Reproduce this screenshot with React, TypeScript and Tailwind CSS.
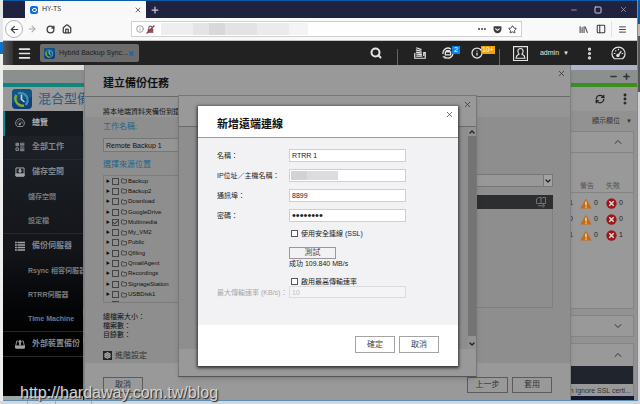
import type { ReactNode } from "react";
import {
  ArrowLeft,
  ArrowRight,
  Check,
  ChevronDown,
  ChevronUp,
  Ellipsis,
  EllipsisVertical,
  Folder,
  House,
  Info,
  Menu,
  Minus,
  PanelLeft,
  Plus,
  RefreshCw,
  RotateCw,
  Search,
  Settings,
  Square,
  Star,
  X,
} from "lucide-react";
import { FaGetPocket } from "react-icons/fa";

const GaugeIcon = ({ className }: { className: string }) => (
  <svg viewBox="0 0 16 16" className={className} fill="none" stroke="currentColor" strokeWidth="1.3">
    <path d="M3.6 13.6a7 7 0 1 1 8.8 0z" strokeLinejoin="round" />
    <path d="M7.2 10.4 11 5.6M8 3v1.6M3 8h1.6M11.4 8H13M4.6 4.8l1 1" />
    <circle cx="7.4" cy="10" r="1.2" fill="currentColor" />
  </svg>
);

const TasksIcon = ({ className }: { className: string }) => (
  <svg viewBox="0 0 16 16" className={className} fill="none" stroke="currentColor" strokeWidth="1.3">
    <path d="M1.5 2h4v4h-4zM1.5 9.5h4v4h-4zM8 2h7M8 4.2h7M8 6.4h7M8 9.5h7M8 11.7h7M8 13.9h7" />
    <path d="m2.2 3.6 1.2 1.3 2.4-3" />
  </svg>
);

const StorageIcon = ({ className }: { className: string }) => (
  <svg viewBox="0 0 16 16" className={className} fill="none" stroke="currentColor" strokeWidth="1.6">
    <path d="M1.5 1.5h13v13h-13z" />
    <path d="M1.5 11h13v3.5h-13z" fill="currentColor" />
    <path d="M8 2.5v4" strokeWidth="2.8" />
    <path d="M4 5.4h8L8 10z" fill="currentColor" stroke="none" />
  </svg>
);

const ServerIcon = ({ className }: { className: string }) => (
  <svg viewBox="0 0 16 16" className={className} fill="currentColor">
    <path d="M0 1h3v2.6H0zM4 1h12v2.6H4zM0 5h3v2.6H0zM4 5h12v2.6H4zM0 9h3v2.6H0zM4 9h12v2.6H4zM0 13h3v2.4H0zM4 13h12v2.4H4z" />
  </svg>
);

const DeviceIcon = ({ className }: { className: string }) => (
  <svg viewBox="0 0 16 16" className={className} fill="none" stroke="currentColor" strokeWidth="1.4">
    <path d="M4.5 3H3L1 11v3.5h14V11l-2-8h-1.500" />
    <path d="M1 11h14v3.500H1z" fill="currentColor" />
    <path d="M8 10V4" strokeWidth="2.8" />
    <path d="M4.500 5h7L8 .6z" fill="currentColor" stroke="none" />
  </svg>
);

const StackIcon = ({ className }: { className: string }) => (
  <svg viewBox="0 0 16 16" className={className} fill="none" stroke="currentColor" strokeWidth="1.6">
    <path d="M3 1l7 2.500M2.500 3.800l7.500 2M2.500 6.800l8 1.300M3 9.600l7.500.6M3 12.200h8" />
    <path d="M1 8v7h14V7.500h-2V12" />
  </svg>
);

const UserIcon = ({ className }: { className: string }) => (
  <svg viewBox="0 0 16 16" className={className} fill="none" stroke="currentColor" strokeWidth="1.2">
    <path d="M.6.6h14.800v14.800H.6z" />
    <path d="M8 2.600c-2 0-2.800 1.400-2.800 3 0 1.300.6 2.400 1.300 3C5 9.400 3.400 10 3.200 13h9.600c-.2-3-1.800-3.600-3.300-4.400.7-.6 1.300-1.700 1.300-3 0-1.600-.8-3-2.800-3z" />
  </svg>
);

const SyncIcon = ({ className }: { className: string }) => (
  <svg viewBox="0 0 16 16" className={className} fill="none" stroke="currentColor" strokeWidth="1.7">
    <path d="M1.500 9.500A6.500 6.500 0 0 1 12 3M14.500 7A6.500 6.500 0 0 1 4 13.300M4 13.300H1M4 13.300v2.500" />
    <path d="M4.500 6.500h7v4h-7zM6 6.500V5h4v1.500" />
  </svg>
);

const LibraryIcon = ({ className }: { className: string }) => (
  <svg viewBox="0 0 16 16" className={className} fill="none" stroke="currentColor" strokeWidth="1.8">
    <path d="M2 2v12M5.500 4v10M9 2v12M11 3l4 11" />
  </svg>
);

const LockOffIcon = ({ className }: { className: string }) => (
  <svg viewBox="0 0 16 16" className={className} fill="none">
    <path d="M5 8V5a3 3 0 0 1 6 0v3" stroke="#666" strokeWidth="2" />
    <path d="M3 7h10v7H3z" fill="#666" />
    <path d="M1 15 15 1" stroke="#d6203c" strokeWidth="2.400" />
  </svg>
);

const AppLogo = ({ className }: { className: string }) => (
  <svg viewBox="0 0 20 20" className={className} fill="none">
    <rect width="20" height="20" rx="4" fill="#0d3f78" />
    <path d="M0 4a4 4 0 0 1 4-4h12a4 4 0 0 1 4 4v4L0 14z" fill="#125583" />
    <path d="M4.500 6A7 7 0 0 0 12 16.500" stroke="#86a82f" strokeWidth="2.400" />
    <path d="M6 4.500a7 7 0 0 1 7.500 11.500" stroke="#3f8fb4" strokeWidth="2.400" />
    <path d="M9.500 5.500v5l3 2.500" stroke="#c8d4da" strokeWidth="1.600" />
  </svg>
);

const WarningIcon = () => (
  <svg viewBox="0 0 12 11" className="h-[11px] w-3">
    <path d="M6 .5 11.700 10.500H.3z" fill="#c76a14" />
    <path d="M6 3.500v4M6 8.400v1.400" stroke="#e8dccb" strokeWidth="1.400" />
  </svg>
);

const ErrorIcon = () => (
  <svg viewBox="0 0 12 12" className="size-[11px]">
    <circle cx="6" cy="6" r="5.600" fill="#a51418" />
    <path d="m3.600 3.600 4.800 4.800M8.400 3.600 3.600 8.400" stroke="#ddd" strokeWidth="1.600" />
  </svg>
);

const ExportIcon = () => (
  <svg viewBox="0 0 16 16" className="size-3" fill="none" stroke="#77797b" strokeWidth="1.200">
    <path d="M2 9V4l3-2h3v8H2zM8 4l2-2h4v8H8" />
    <path d="M4 13h8M10 10.500l3 2.500-3 2.500" />
  </svg>
);

const BrowserTabs = () => (
  <div className="flex h-[18px] border-t border-[#0a5aa8] bg-[#20233f] pl-[22px] text-[#c9cad6]">
    <div className="flex w-[121px] items-center bg-[#f8f8fa] pr-1 pl-[5px] text-[#222]">
      <span className="flex size-2 items-center justify-center rounded-[2px] bg-[#0d6fe0]">
        <span className="h-1 w-[5px] rounded-full border border-white" />
      </span>
      <span className="ml-1 flex-1 font-['Open_Sans',sans-serif] text-[7px]">HY-TS</span>
      <button aria-label="Close tab">
        <X className="size-2" strokeWidth={2} />
      </button>
    </div>
    <button aria-label="New tab" className="px-1">
      <Plus className="size-[10px]" strokeWidth={3} />
    </button>
    <div className="ml-auto flex items-center">
      <button aria-label="Minimize" className="flex w-6 justify-center">
        <Minus className="size-2" />
      </button>
      <button aria-label="Maximize" className="flex w-6 justify-center">
        <Square className="size-2" strokeWidth={3} />
      </button>
      <button aria-label="Close" className="flex w-[27px] justify-center">
        <X className="size-[9px]" strokeWidth={1.5} />
      </button>
    </div>
  </div>
);

const BrowserToolbar = () => (
  <div className="flex h-[23px] items-center border-b border-[#c4c4c6] bg-[#f9f9fa] text-[#3d3d40]">
    <button aria-label="Back" className="ml-[2px] flex size-[18px] items-center justify-center rounded-full border border-[#b5b5b8] bg-white">
      <ArrowLeft className="size-[11px]" strokeWidth={2.5} />
    </button>
    <button aria-label="Forward" className="flex w-[18px] justify-center text-[#a5a5a8]">
      <ArrowRight className="size-[10px]" strokeWidth={2.5} />
    </button>
    <button aria-label="Reload" className="flex w-[18px] justify-center">
      <RotateCw className="size-[9px]" strokeWidth={3.5} />
    </button>
    <button aria-label="Home" className="flex w-4 justify-center">
      <House className="size-[10px]" strokeWidth={3} />
    </button>
    <div className="mr-[57px] ml-14 flex h-4 flex-1 items-center gap-[2px] border border-[#d0d0d2] bg-white pl-1">
      <Info className="size-2 text-[#777]" />
      <LockOffIcon className="size-[9px]" />
      <span className="ml-1 flex h-3 w-[147px]">
        <span className="w-8 bg-[#eeeeee]" />
        <span className="w-4 bg-[#e4e4e4]" />
        <span className="w-4 bg-[#d8d8d8]" />
        <span className="w-8 bg-[#e3e3e3]" />
        <span className="w-8 bg-[#ebebeb]" />
        <span className="flex-1 bg-[#f4f4f4]" />
      </span>
      <span className="mr-1 ml-auto flex items-center gap-[6px]">
        <Ellipsis className="size-[10px]" strokeWidth={3} />
        <FaGetPocket className="size-[9px]" />
        <Star className="size-[9px]" strokeWidth={2.5} />
      </span>
    </div>
    <div className="flex items-center">
      <LibraryIcon className="mr-2 size-[9px]" />
      <PanelLeft className="mr-[5px] size-[10px]" strokeWidth={2.5} />
      <button aria-label="Open menu" className="flex h-4 w-[26px] items-center justify-center border-l border-[#e2e2e2] pr-1">
        <Menu className="size-[9px]" strokeWidth={2.5} />
      </button>
    </div>
  </div>
);

const Badge = ({ color, children }: { color: string; children: ReactNode }) => (
  <span className={`absolute -top-[1px] left-[10px] text-[7px] leading-[8px] text-white ${color}`}>
    {children}
  </span>
);

const DesktopBar = () => (
  <div className="flex h-6 bg-[#222222] text-[#e4e4e4]">
    <div className="w-[10px] bg-linear-to-r from-[#555] to-[#333]" />
    <button aria-label="Main menu" className="mr-2 ml-1 flex w-[15px] items-center justify-center">
      <Menu className="size-[15px]" strokeWidth={2.5} />
    </button>
    <div className="my-[3px] flex w-[99px] items-center rounded-[2px] bg-[#6c6c6c] px-1 text-[#1c1c1c]">
      <AppLogo className="size-[11px]" />
      <span className="ml-1 flex-1 text-[7px]">Hybrid Backup Sync...</span>
      <button aria-label="Close Hybrid Backup Sync">
        <X className="size-[7px] text-[#1f5f9c]" strokeWidth={4} />
      </button>
    </div>
    <div className="ml-auto flex items-center">
      <button aria-label="Search" className="mr-[15px]">
        <Search className="size-3" strokeWidth={4} />
      </button>
      <span className="mt-2 h-4 w-px bg-[#666]" />
      <StackIcon className="ml-4 size-3" />
      <span className="relative ml-4">
        <SyncIcon className="size-3" />
        <Badge color="bg-[#1080f0] px-[2px]">2</Badge>
      </span>
      <span className="relative mr-4 ml-[17px]">
        <Info className="size-3" strokeWidth={2.5} />
        <Badge color="bg-[#f5a00c] px-px">10+</Badge>
      </span>
      <span className="mt-2 h-4 w-px bg-[#666]" />
      <UserIcon className="ml-[13px] size-[15px]" />
      <button className="ml-3 flex items-center gap-1 text-[7px]">
        admin <span className="text-[6px]">▼</span>
      </button>
      <button aria-label="More" className="ml-[13px]">
        <EllipsisVertical className="size-[15px]" strokeWidth={3} />
      </button>
      <GaugeIcon className="mr-[11px] ml-[14px] size-[15px]" />
    </div>
  </div>
);

const navItems = [
  { label: "總覽", icon: GaugeIcon, active: true },
  { label: "全部工作", icon: TasksIcon, line: true },
  { label: "儲存空間", icon: StorageIcon },
  { label: "儲存空間" },
  { label: "設定檔", line: true },
  { label: "備份伺服器", icon: ServerIcon },
  { label: "Rsync 相容伺服器" },
  { label: "RTRR伺服器" },
  { label: "Time Machine", line: true },
  { label: "外部裝置備份", icon: DeviceIcon, line: true },
];

const Sidebar = () => (
  <nav className="flex w-20 flex-col overflow-hidden border-b-4 border-[#9aa6a6] bg-linear-to-b from-[#20242b] via-[#121418] to-black">
    <ul className="grid h-[246px] auto-rows-fr">
      {navItems.map(({ label, icon: Icon, active, line }, i) => (
        <li key={i} className={line ? "border-b border-[#25282c]" : ""}>
          <a
            href="#"
            className={`flex h-full items-center font-bold whitespace-nowrap ${
              active
                ? "border-l-2 border-[#0b8a8a] bg-[#181b20] pl-[10px] text-[8px] text-[#b4b4b4]"
                : Icon
                  ? "pl-3 text-[8px] text-[#83868b]"
                  : "pl-[25px] text-[7px] text-[#777a7f]"
            }`}
          >
            {Icon && <Icon className="mr-[7px] size-[10px] shrink-0 text-[#a2a4a6]" />}
            {label}
          </a>
        </li>
      ))}
    </ul>
  </nav>
);

const jobs = [
  { success: 1, warning: 0, failed: 0 },
  { success: 0, warning: 0, failed: 0 },
  { success: 1, warning: 0, failed: 1 },
];

const Overview = () => (
  <main className="flex flex-1 flex-col bg-[#929292] pr-[3px]">
    <button className="flex h-5 items-center justify-end gap-[6px] pr-[2px] text-[7px] text-[#333]">
      顯示欄位 <span className="text-[6px]">▼</span>
    </button>
    <section className="h-[178px] border border-[#848484] bg-[#999]">
      <div className="flex h-[21px] items-center justify-end border-b border-[#848484] pr-[9px]">
        <ChevronUp className="size-3 text-[#333]" strokeWidth={2} />
      </div>
      <table className="mt-[27px] w-full text-left text-[7px] leading-[12px] text-[#222]">
        <thead className="text-[#555]">
          <tr className="border-b border-[#848484]">
            <th className="pr-4 text-right font-normal">成功</th>
            <th className="w-[26px] font-normal">警告</th>
            <th className="w-[27px] font-normal">失敗</th>
          </tr>
        </thead>
        <tbody>
          {jobs.map((job, i) => (
            <tr key={i} className="h-4">
              <td className="pt-1 pr-[7px] text-right">{job.success}</td>
              <td className="pt-1">
                <span className="flex items-center gap-[2px]"><WarningIcon />{job.warning}</span>
              </td>
              <td className="pt-1">
                <span className="flex items-center gap-[2px]"><ErrorIcon />{job.failed}</span>
              </td>
            </tr>
          ))}
        </tbody>
      </table>
    </section>
    <section className="mt-[6px] flex h-[22px] items-center justify-end border border-[#848484] bg-[#999] pr-[9px]">
      <ChevronDown className="size-3 text-[#333]" strokeWidth={2} />
    </section>
    <section className="mt-[6px] border-x border-t border-[#848484] bg-[#999]">
      <div className="flex h-[22px] items-center justify-end pr-[9px]">
        <ChevronUp className="size-3 text-[#333]" strokeWidth={2} />
      </div>
      <div className="h-[18px] bg-[#20252d]" />
      <p className="h-3 pr-[2px] text-right text-[7px] leading-[13px] text-[#333]">You can ignore SSL certi...</p>
    </section>
    <div className="h-1 bg-[#15172a]" />
  </main>
);

const BackupApp = () => (
  <div className="flex h-full flex-col">
    <div className="h-[5px] bg-linear-to-r from-[#e6e6dc] to-[#aab0c8]" />
    <div className="flex h-[13px] items-center justify-end gap-1 bg-[#8b908e] pr-[6px] text-[#333]">
      <Minus className="size-[9px]" strokeWidth={4} />
      <Plus className="size-[9px]" strokeWidth={4} />
    </div>
    <div className="h-1 bg-linear-to-r from-[#0b8484] to-[#3d9010]" />
    <header className="flex h-6 items-center bg-[#999] pr-[3px] pl-[9px]">
      <AppLogo className="size-5" />
      <h1 className="ml-[6px] text-[13px] text-[#285a8c]">混合型備份</h1>
      <button aria-label="Refresh" className="mr-[10px] ml-auto">
        <RefreshCw className="size-[10px] text-[#222]" strokeWidth={3} />
      </button>
      <button aria-label="Options" className="flex w-[19px] justify-center">
        <EllipsisVertical className="size-[14px] text-[#222]" strokeWidth={3} />
      </button>
    </header>
    <div className="flex flex-1">
      <Sidebar />
      <Overview />
    </div>
  </div>
);

const folders = [
  "Backup",
  "Backup2",
  "Download",
  "GoogleDrive",
  "Multimedia",
  "My_VM2",
  "Public",
  "Qfiling",
  "QmailAgent",
  "Recordings",
  "SignageStation",
  "USBDisk1",
  "Web",
];

const dimButton = "h-4 border border-[#5c5c5c] text-[8px] leading-none text-[#333]";

const BackupJobDialog = () => (
  <section
    aria-label="建立備份任務"
    className="absolute inset-y-0 right-[66px] left-[81px] flex flex-col border-x border-[#808080] bg-[#999] shadow-md"
  >
    <header className="flex h-8 justify-between border-b border-[#6a6a6a] pr-1 pl-[18px]">
      <h2 className="pt-3 text-[11px] leading-[13px] font-bold text-[#111]">建立備份任務</h2>
      <button aria-label="Close" className="h-[17px]">
        <X className="size-[9px] text-[#333]" strokeWidth={2} />
      </button>
    </header>
    <p className="h-5 bg-[#959595] pt-[10px] pl-[18px] text-[7px] leading-[9px] text-[#111]">將本地端資料夾備份到遠端</p>
    <div className="flex h-[246px] bg-[#8e8e8e] pr-[17px] pl-[18px]">
      <div className="w-[110px] text-[7px] leading-[9px] text-[#111]">
        <label htmlFor="job-name" className="block pt-[5px] text-[8px] leading-[10px] text-[#1d6788]">
          工作名稱:
        </label>
        <input
          id="job-name"
          defaultValue="Remote Backup 1"
          className="mt-[6px] block h-[14px] w-full border border-[#777] bg-[#959595] px-[2px] text-[7px]"
        />
        <h3 className="pt-2 text-[8px] leading-[10px] text-[#1d6788]">選擇來源位置</h3>
        <div className="mt-[5px] h-32 overflow-hidden border border-[#7c7c7c] pl-[2px]">
          <ul className="grid h-[134px] auto-rows-fr text-[6px]">
            {folders.map((name) => (
              <li key={name} className="flex items-center">
                <span className="mr-[2px] text-[4px]">▶</span>
                <label className="flex items-center gap-px">
                  <span className="relative mr-px flex">
                    <input
                      type="checkbox"
                      defaultChecked={name === "Multimedia"}
                      className="peer size-[7px] appearance-none border border-[#444]"
                    />
                    <Check className="absolute inset-0 hidden size-[7px] peer-checked:block" strokeWidth={3} />
                  </span>
                  <Folder className="size-[6px] text-[#333]" strokeWidth={3} />
                  {name}
                </label>
              </li>
            ))}
          </ul>
        </div>
        <div className="mt-[9px]">
          <p>總檔案大小：</p>
          <p>檔案數：</p>
          <p>目錄數：</p>
        </div>
        <button className="mt-3 flex items-center gap-[3px] text-[8px] text-[#333]">
          <span className="flex size-[9px] items-center justify-center bg-[#222] text-[#aaa]">
            <Settings className="size-[7px]" strokeWidth={4} />
          </span>
          進階設定
        </button>
      </div>
      <div className="ml-4 flex-1 pt-[57px]">
        <div className="relative">
          <select aria-label="目的地" className="block h-[13px] w-full appearance-none border border-[#777] bg-[#989898] text-[7px]">
            <option></option>
          </select>
          <span className="pointer-events-none absolute inset-y-0 right-0 flex w-[10px] items-center justify-center border border-[#777] bg-[#a2a2a2]">
            <ChevronDown className="size-2 text-[#222]" strokeWidth={4} />
          </span>
        </div>
        <div className="mt-2 flex h-[14px] items-center justify-end bg-[#2d2e30] pr-[6px]">
          <ExportIcon />
        </div>
        <div className="h-[99px] border border-t-0 border-[#808080]" />
      </div>
    </div>
    <footer className="flex flex-1 items-start gap-1 pt-[14px] pr-[18px] pl-[18px]">
      <button className={`mr-auto w-10 ${dimButton}`}>取消</button>
      <button className={`w-[41px] ${dimButton}`}>上一步</button>
      <button className={`w-10 ${dimButton}`}>套用</button>
    </footer>
  </section>
);

const DestinationDialog = () => (
  <section
    aria-label="遠端位置"
    className="absolute top-[30px] left-[175px] flex h-[282px] w-[299px] flex-col border border-[#777] border-b-[#555] bg-[#999] shadow-md"
  >
    <header className="flex h-[31px] justify-end border-b border-[#6a6a6a] pr-1">
      <button aria-label="Close" className="h-4">
        <X className="size-[9px] text-[#333]" strokeWidth={2} />
      </button>
    </header>
    <div className="flex h-[222px] justify-end bg-[#8e8e8e]">
      <div className="flex w-2 flex-col items-center bg-[#929292] pt-px pb-px text-[#222]">
        <ChevronUp className="size-2" strokeWidth={4} />
        <div className="w-full flex-1 bg-[#747474]" />
        <ChevronDown className="mt-1 size-2" strokeWidth={4} />
      </div>
    </div>
  </section>
);

const fieldInput = "h-[13px] w-[117px] border border-[#cdd0d2] bg-white px-[2px] leading-none";

const Field = ({ id, label, children }: { id: string; label: string; children: ReactNode }) => (
  <div className="flex h-5 items-center">
    <label htmlFor={id} className="w-[72px]">{label}</label>
    {children}
  </div>
);

const CheckField = ({ label }: { label: string }) => (
  <label className="ml-[72px] flex items-center gap-[3px] pl-[2px]">
    <input type="checkbox" className="size-[7px] appearance-none border border-[#555] bg-white" />
    {label}
  </label>
);

const lightButton = "h-[17px] w-10 border border-[#a3a3a3] bg-white text-[8px] leading-none text-[#444]";

const ConnectionDialog = () => (
  <form
    aria-label="新增遠端連線"
    onSubmit={(e) => e.preventDefault()}
    className="absolute top-[41px] left-[195px] flex w-[260px] flex-col bg-white text-[7px] leading-[9px] text-[#222] shadow-[0_1px_3px_1px_#333]"
  >
    <header className="flex h-8 justify-between border-b border-[#999] pr-1 pl-[19px]">
      <h2 className="pt-3 text-[11px] leading-[13px] font-bold text-[#111]">新增遠端連線</h2>
      <button type="button" aria-label="Close" className="h-4">
        <X className="size-[9px] text-[#444]" strokeWidth={2} />
      </button>
    </header>
    <div className="h-[187px] bg-[#f2f2f5] pt-[7px] pl-[19px]">
      <Field id="name" label="名稱：">
        <input id="name" defaultValue="RTRR 1" className={`text-[7px] ${fieldInput}`} />
      </Field>
      <Field id="host" label="IP位址／主機名稱：">
        <div className="relative flex">
          <input id="host" className={`text-[7px] ${fieldInput}`} />
          <span className="absolute top-[2px] left-[2px] flex h-[9px] w-[47px] bg-[#dcdcdc]">
            <span className="w-4 bg-[#d2d2d2]" />
          </span>
        </div>
      </Field>
      <Field id="port" label="通訊埠：">
        <input id="port" defaultValue="8899" className={`text-[7px] ${fieldInput}`} />
      </Field>
      <Field id="password" label="密碼：">
        <input id="password" type="password" defaultValue="password" className={`text-[11px] ${fieldInput}`} />
      </Field>
      <div className="mt-1">
        <CheckField label="使用安全連線 (SSL)" />
      </div>
      <button type="button" className="mt-[9px] ml-[72px] block h-3 w-[47px] border border-[#999] text-[8px] leading-none text-[#555]">
        測試
      </button>
      <p className="ml-[72px]">成功 109.840 MB/s</p>
      <div className="mt-[9px]">
        <CheckField label="啟用最高傳輸速率" />
      </div>
      <div className="flex items-center text-[#a8a8aa]">
        <label htmlFor="max-rate" className="w-[72px] whitespace-nowrap">最大傳輸速率 (KB/s)：</label>
        <input
          id="max-rate"
          disabled
          defaultValue="10"
          className="h-3 w-[117px] border border-[#dcdcdf] bg-[#f4f4f6] px-[2px] text-[7px] leading-none text-[#c0c0c0]"
        />
      </div>
    </div>
    <footer className="flex justify-end gap-1 pt-[11px] pr-[19px] pb-[13px]">
      <button className={lightButton}>確定</button>
      <button type="button" className={lightButton}>取消</button>
    </footer>
  </form>
);

const App = () => {
  return (
    <div className="relative flex min-h-screen flex-col overflow-hidden bg-[#dcdfe2] font-['Liberation_Sans','Noto_Sans_CJK_TC',sans-serif]">
      <div className="flex">
        <div className="flex w-[3px] flex-col">
          <div className="h-[42px] bg-[#e3e7ec]" />
          <div className="h-3 bg-[#1270c0]" />
          <div className="flex-1 bg-[#eeeeee]" />
        </div>
        <div className="min-w-0 flex-1 border-b border-[#5b8fb8]">
          <BrowserTabs />
          <BrowserToolbar />
          <div className="relative">
            <DesktopBar />
            <div className="relative h-[335px] overflow-hidden">
              <BackupApp />
              <BackupJobDialog />
              <DestinationDialog />
              <ConnectionDialog />
            </div>
          </div>
        </div>
        <div className="flex w-[3px] flex-col border-l border-[#4f97d0]">
          <div className="h-6 bg-[#0a5aa8]" />
          <div className="h-3 bg-[#c9b5ae]" />
          <div className="h-14 bg-[#555]" />
          <div className="flex-1 bg-[#cfd2d6]" />
        </div>
      </div>
      <div className="flex flex-1 divide-x divide-[#aaa] bg-[#d5d5d5]">
        <div className="w-7" />
        <div className="w-7" />
        <div className="w-9" />
        <div className="flex-1" />
      </div>
      <p className="absolute bottom-0 left-5 text-[16px] leading-[22px] text-[#d4d4d4] [text-shadow:1px_1px_1px_#222]">
        http://hardaway.com.tw/blog
      </p>
    </div>
  );
};

export default App;
